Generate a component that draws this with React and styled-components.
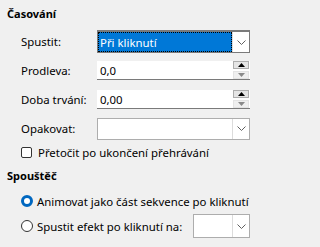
import React from "react";
import styled, { createGlobalStyle } from "styled-components";

const Global = createGlobalStyle`
  html, body { margin: 0; padding: 0; background: #f0f0f0; }
  body { font-family: "Noto Sans", "Open Sans", sans-serif; font-size: 11.4px; color: #000; }
`;

const Panel = styled.div`
  width: 258px;
  height: 247px;
  background: #f0f0f0;
  display: flex;
  flex-direction: column;
  box-sizing: border-box;
`;

const Heading = styled.div`
  height: ${(p) => p.$h}px;
  display: flex;
  align-items: center;
  padding-left: 7px;
  font-weight: 700;
  font-size: 11px;
`;

const Row = styled.div`
  height: ${(p) => p.$h || 29}px;
  display: flex;
  align-items: center;
  padding-left: 21px;
  padding-right: 8px;
`;

const Label = styled.div`
  width: 76px;
  flex: none;
`;

const Combo = styled.div`
  flex: ${(p) => (p.$w ? "none" : "1")};
  width: ${(p) => (p.$w ? `${p.$w}px` : "auto")};
  height: ${(p) => p.$h || 23}px;
  box-sizing: border-box;
  border: 1px solid ${(p) => (p.$focus ? "#7a7a7a" : "#adadad")};
  background: #fff;
  display: flex;
  ${(p) => (p.$focus ? "border-width: 2px 1px 1px 1px;" : "")}
`;

const ComboText = styled.div`
  flex: 1;
  display: flex;
  align-items: center;
  padding-left: 2px;
  background: ${(p) => (p.$sel ? "#0078d7" : "#fff")};
  color: ${(p) => (p.$sel ? "#fff" : "#000")};
  outline: ${(p) => (p.$sel ? "1px dotted #000" : "none")};
  outline-offset: -1px;
`;

const ComboButton = styled.div`
  width: 16px;
  flex: none;
  border-left: 1px solid #dcdcdc;
  display: flex;
  align-items: center;
  justify-content: center;
`;

const Chevron = () => (
  <svg width="9" height="5" viewBox="0 0 9 5">
    <path d="M0.5 0.5 L4.5 4.5 L8.5 0.5" fill="none" stroke="#606060" strokeWidth="1" />
  </svg>
);

const Spin = styled.div`
  flex: 1;
  height: 19px;
  box-sizing: border-box;
  background: #fff;
  border-bottom: 1px solid #7a7a7a;
  display: flex;
  align-items: center;
`;

const SpinText = styled.div`
  flex: 1;
  padding-left: 3px;
`;

const SpinButtons = styled.div`
  width: 16px;
  margin-right: 1px;
  display: flex;
  flex-direction: column;
  gap: 2px;
`;

const SpinBtn = styled.div`
  height: 8px;
  box-sizing: border-box;
  border: 1px solid ${(p) => (p.$off ? "#e3e3e3" : "#adadad")};
  background: ${(p) => (p.$off ? "#efefef" : "#e5e5e5")};
  display: flex;
  align-items: center;
  justify-content: center;
`;

const Tri = ({ up, off }) => (
  <svg width="7" height="4" viewBox="0 0 7 4">
    <path d={up ? "M0 4 L3.5 0 L7 4 Z" : "M0 0 L3.5 4 L7 0 Z"} fill={off ? "#8a8a8a" : "#000"} />
  </svg>
);

const CheckBox = styled.div`
  width: 11px;
  height: 11px;
  box-sizing: border-box;
  border: 1px solid #333;
  border-radius: 2px;
  background: #fff;
  margin-right: 6px;
  flex: none;
`;

const Radio = styled.div`
  width: 12px;
  height: 12px;
  box-sizing: border-box;
  border-radius: 50%;
  flex: none;
  margin-right: 4px;
  border: ${(p) => (p.$on ? "3.5px solid #0067c0" : "1px solid #333")};
  background: #fff;
`;

const Text = styled.span`
  white-space: nowrap;
  flex: ${(p) => (p.$grow ? "1" : "none")};
`;

export default function App() {
  return (
    <>
      <Global />
      <Panel>
        <Heading $h={27}>Časování</Heading>
        <Row>
          <Label>Spustit:</Label>
          <Combo $focus>
            <ComboText $sel>Při kliknutí</ComboText>
            <ComboButton>
              <Chevron />
            </ComboButton>
          </Combo>
        </Row>
        <Row>
          <Label>Prodleva:</Label>
          <Spin>
            <SpinText>0,0</SpinText>
            <SpinButtons>
              <SpinBtn>
                <Tri up />
              </SpinBtn>
              <SpinBtn $off>
                <Tri off />
              </SpinBtn>
            </SpinButtons>
          </Spin>
        </Row>
        <Row>
          <Label>Doba trvání:</Label>
          <Spin>
            <SpinText>0,00</SpinText>
            <SpinButtons>
              <SpinBtn>
                <Tri up />
              </SpinBtn>
              <SpinBtn $off>
                <Tri off />
              </SpinBtn>
            </SpinButtons>
          </Spin>
        </Row>
        <Row>
          <Label>Opakovat:</Label>
          <Combo $h={22}>
            <ComboText />
            <ComboButton>
              <Chevron />
            </ComboButton>
          </Combo>
        </Row>
        <Row $h={19}>
          <CheckBox />
          <Text>Přetočit po ukončení přehrávání</Text>
        </Row>
        <Heading $h={26}>Spouštěč</Heading>
        <Row $h={26}>
          <Radio $on />
          <Text>Animovat jako část sekvence po kliknutí</Text>
        </Row>
        <Row $h={24}>
          <Radio />
          <Text $grow>Spustit efekt po kliknutí na:</Text>
          <Combo $w={57} $h={24}>
            <ComboText />
            <ComboButton>
              <Chevron />
            </ComboButton>
          </Combo>
        </Row>
      </Panel>
    </>
  );
}
